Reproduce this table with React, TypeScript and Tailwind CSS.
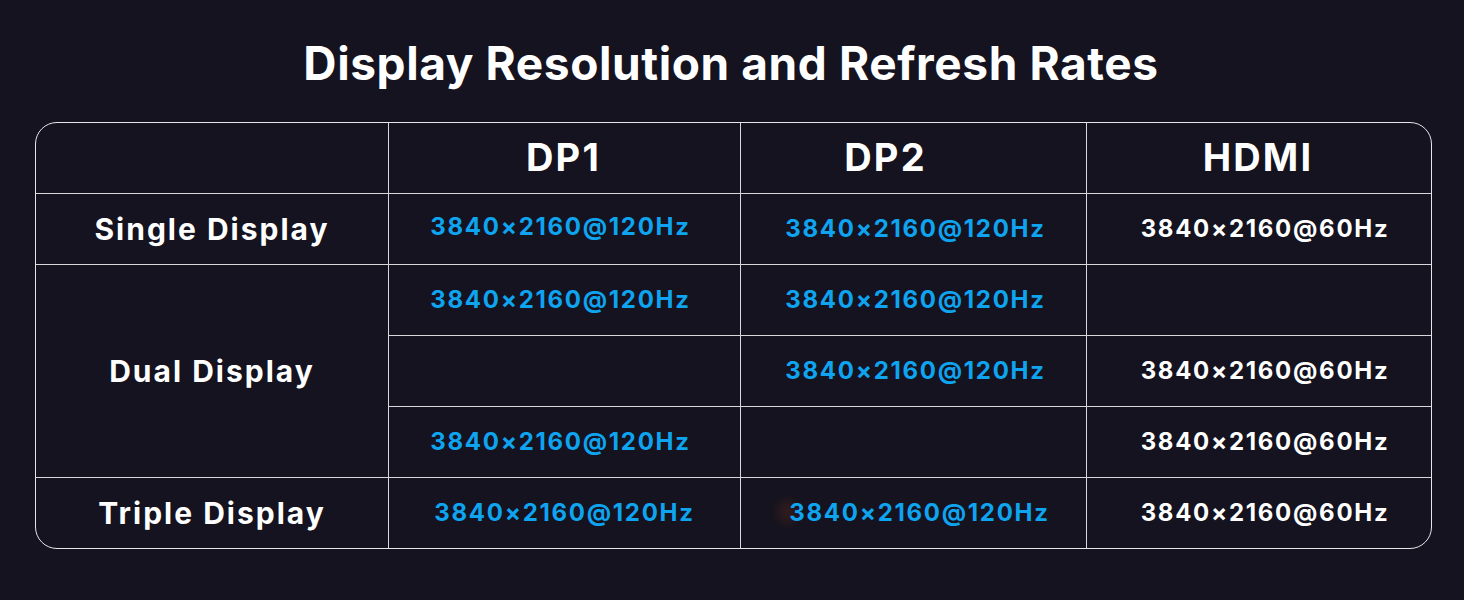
import React from "react";

const font = { fontFamily: "Inter, 'Liberation Sans', sans-serif" };

function V({ t, blue, cls = "" }: { t: string; blue?: boolean; cls?: string }) {
  return (
    <span
      className={`text-[24px] font-bold leading-none tracking-[1.7px] ${blue ? "text-[#0ea4f0]" : "text-white"} ${cls}`}
    >
      {t}
    </span>
  );
}

function L({ t }: { t: string }) {
  return <span className="text-white font-bold text-[30px] leading-none tracking-[2px]">{t}</span>;
}

function H({ t }: { t: string }) {
  return <span className="text-white font-bold text-[38px] leading-none tracking-[2.2px]">{t}</span>;
}

export default function App() {
  const B = "3840×2160@120Hz";
  const W = "3840×2160@60Hz";
  const cell = "flex items-center justify-center border-[#d8d8dc]";
  return (
    <div className="w-[1464px] h-[600px] bg-[#14131f] overflow-hidden" style={font}>
      <h1 className="text-center text-white font-bold text-[46px] leading-none pt-[40px] pr-[2px] tracking-[0.6px]">
        Display Resolution and Refresh Rates
      </h1>
      <div className="ml-[35px] mt-[36px] w-[1397px] border border-[#e6e6ea] rounded-[22px] overflow-hidden">
        <div className="grid grid-cols-[353px_352px_346px_344px] grid-rows-[71px_71px_71px_71px_71px_70px]">
          {/* header */}
          <div className={`${cell} border-r border-b`}></div>
          <div className={`${cell} border-r border-b pb-[2px] pr-[2px]`}>
            <H t="DP1" />
          </div>
          <div className={`${cell} border-r border-b pr-[56px] pb-[2px]`}>
            <H t="DP2" />
          </div>
          <div className={`${cell} border-b pb-[2px] pr-[2px]`}>
            <H t="HDMI" />
          </div>

          {/* single */}
          <div className={`${cell} border-r border-b`}>
            <L t="Single Display" />
          </div>
          <div className={`${cell} border-r border-b pr-[8px] pb-[5px]`}>
            <V t={B} blue />
          </div>
          <div className={`${cell} border-r border-b pl-[4px]`}>
            <V t={B} blue />
          </div>
          <div className={`${cell} border-b pl-[12px]`}>
            <V t={W} />
          </div>

          {/* dual */}
          <div className={`${cell} border-r border-b row-span-3`}>
            <L t="Dual Display" />
          </div>
          <div className={`${cell} border-r border-b pr-[8px]`}>
            <V t={B} blue />
          </div>
          <div className={`${cell} border-r border-b pl-[4px]`}>
            <V t={B} blue />
          </div>
          <div className={`${cell} border-b`}></div>

          <div className={`${cell} border-r border-b`}></div>
          <div className={`${cell} border-r border-b pl-[4px]`}>
            <V t={B} blue />
          </div>
          <div className={`${cell} border-b pl-[12px]`}>
            <V t={W} />
          </div>

          <div className={`${cell} border-r border-b pr-[8px]`}>
            <V t={B} blue />
          </div>
          <div className={`${cell} border-r border-b`}></div>
          <div className={`${cell} border-b pl-[12px]`}>
            <V t={W} />
          </div>

          {/* triple */}
          <div className={`${cell} border-r`}>
            <L t="Triple Display" />
          </div>
          <div className={`${cell} border-r`}>
            <V t={B} blue />
          </div>
          <div className={`${cell} border-r pl-[12px] relative`}>
            <span className="absolute left-[36px] top-[22px] w-[20px] h-[24px] rounded-full bg-[#6a2e1a] opacity-30 blur-[5px]"></span>
            <V t={B} blue cls="relative" />
          </div>
          <div className={`${cell} pl-[12px]`}>
            <V t={W} />
          </div>
        </div>
      </div>
    </div>
  );
}
